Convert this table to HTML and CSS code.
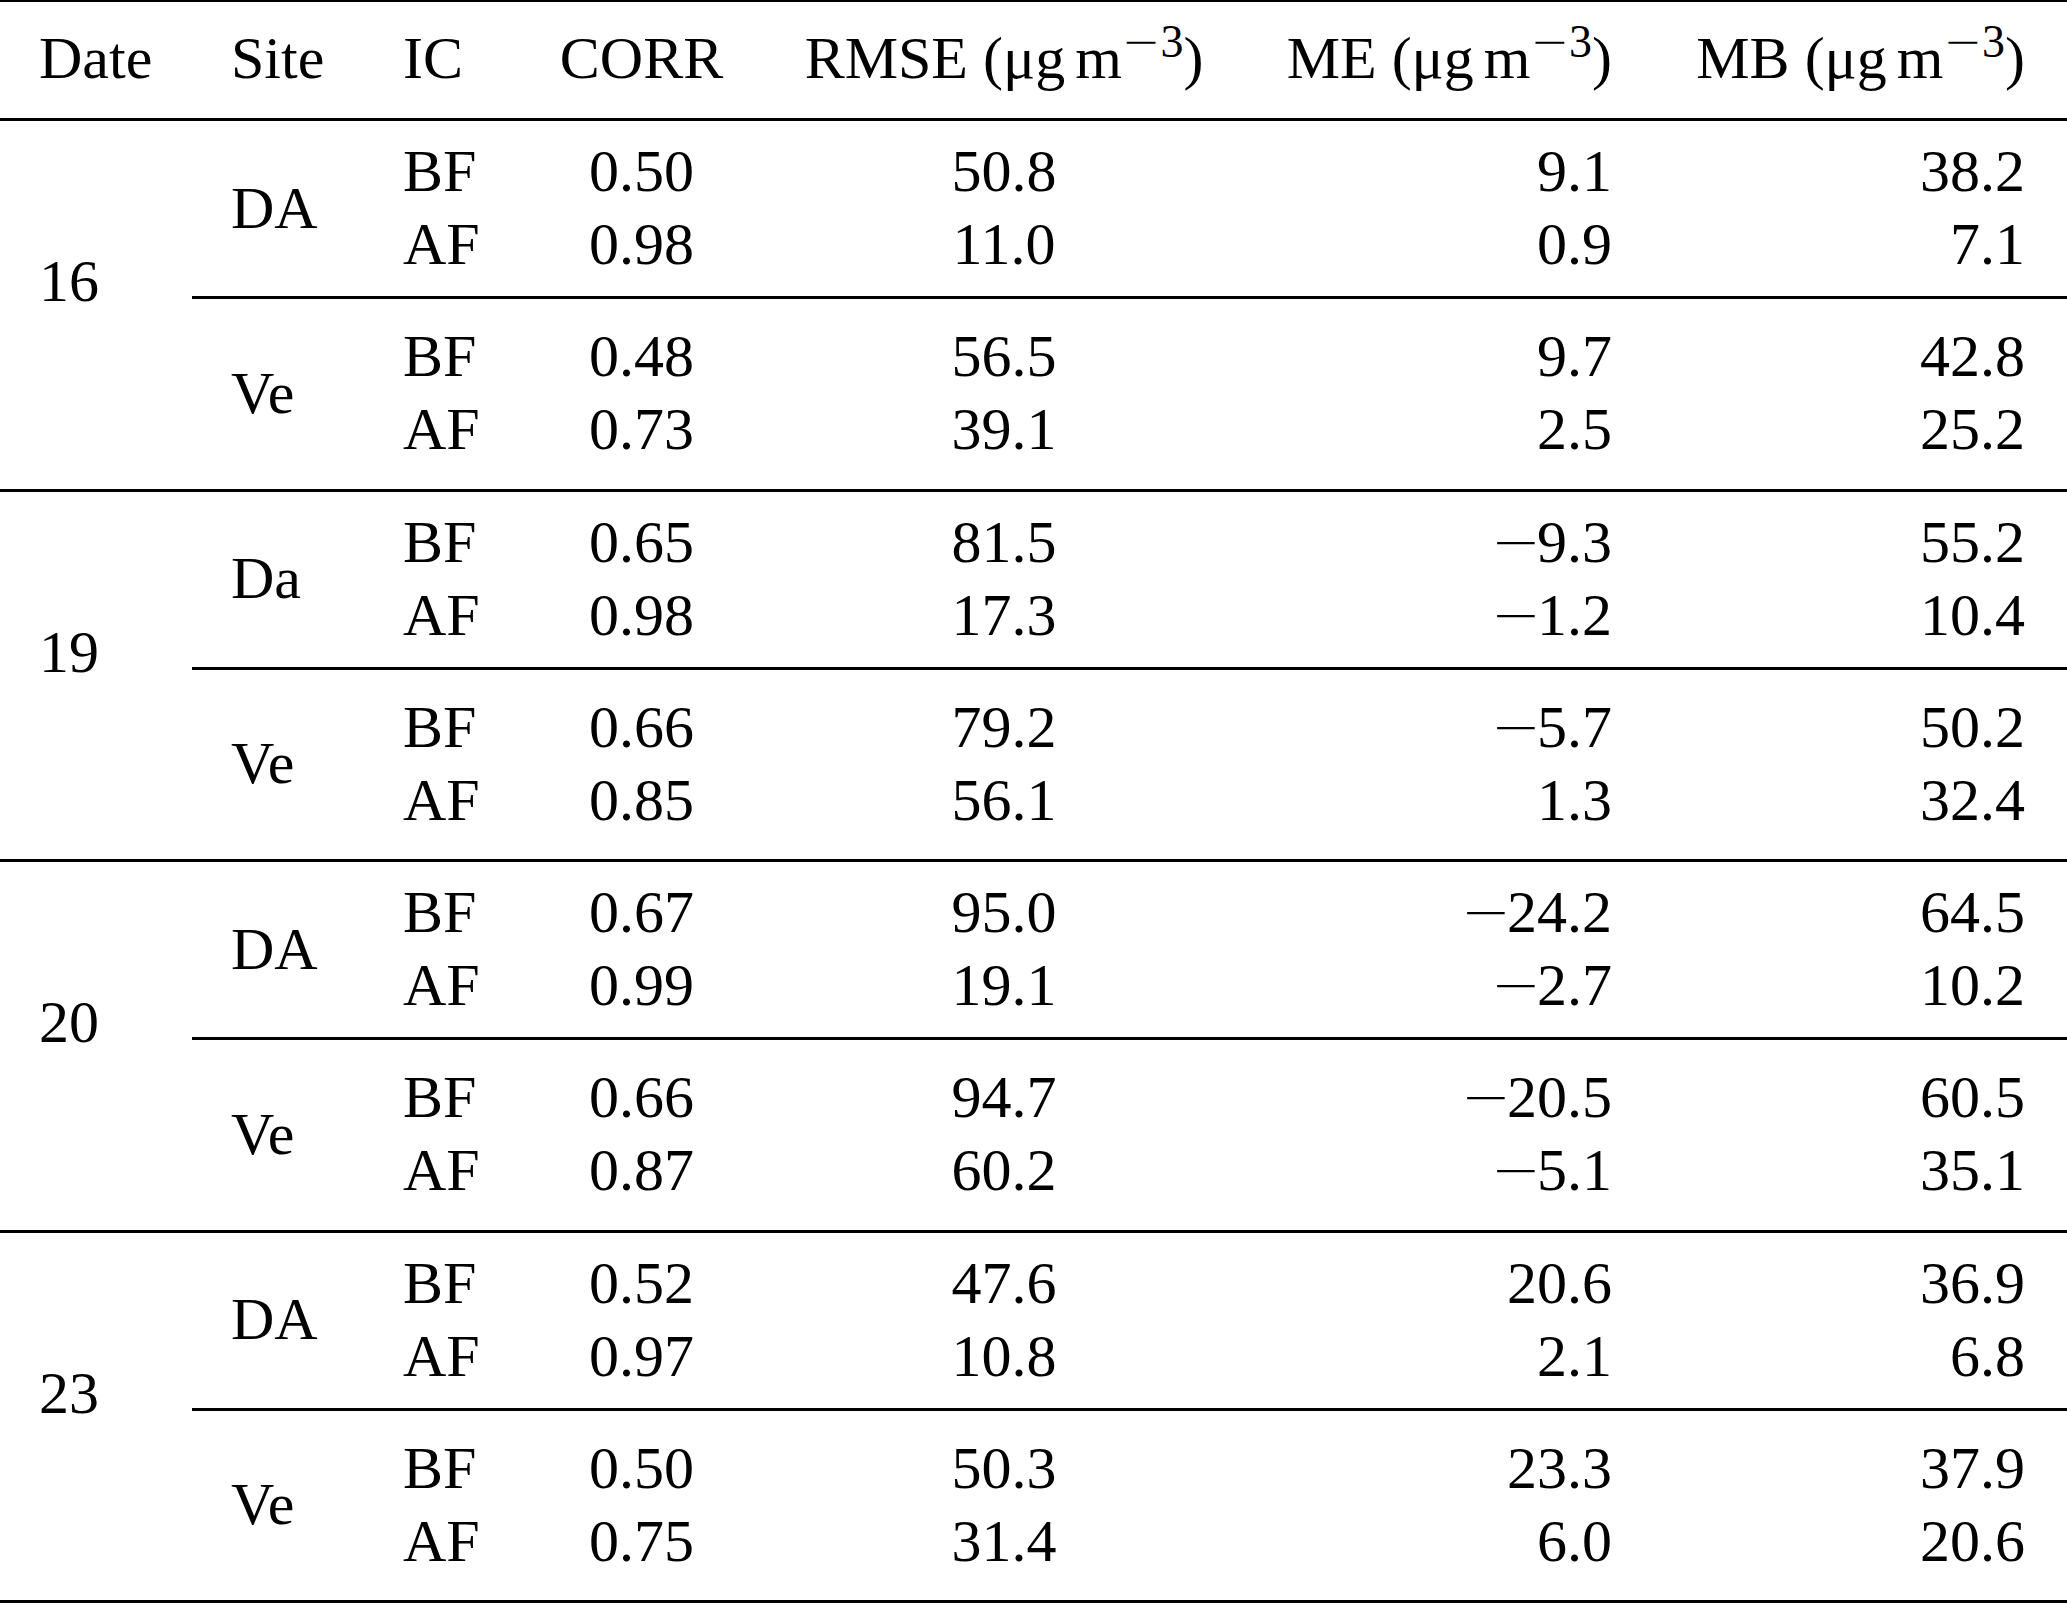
FILE: index.html
```html
<!DOCTYPE html>
<html lang="en">
<head>
<meta charset="utf-8">
<title>Table</title>
<link rel="stylesheet" href="styles.css">
</head>
<body>
<div class="table">
  <div class="head">
    <div>Date</div>
    <div>Site</div>
    <div>IC</div>
    <div class="ctr">CORR</div>
    <div class="ctr">RMSE (μg<span class="thin"></span>m<span class="sup"><span class="mi">−</span>3</span>)</div>
    <div class="rt">ME (μg<span class="thin"></span>m<span class="sup"><span class="mi">−</span>3</span>)</div>
    <div class="rt">MB (μg<span class="thin"></span>m<span class="sup"><span class="mi">−</span>3</span>)</div>
  </div>

  <div class="group">
    <div class="date">16</div>
    <div class="subs">
      <div class="sub">
        <div class="site">DA</div>
        <div>BF</div><div class="ctr">0.50</div><div class="ctr">50.8</div><div class="rt">9.1</div><div class="rt">38.2</div>
        <div>AF</div><div class="ctr">0.98</div><div class="ctr">11.0</div><div class="rt">0.9</div><div class="rt">7.1</div>
      </div>
      <div class="sub sub2">
        <div class="site">Ve</div>
        <div>BF</div><div class="ctr">0.48</div><div class="ctr">56.5</div><div class="rt">9.7</div><div class="rt">42.8</div>
        <div>AF</div><div class="ctr">0.73</div><div class="ctr">39.1</div><div class="rt">2.5</div><div class="rt">25.2</div>
      </div>
    </div>
  </div>

  <div class="group">
    <div class="date">19</div>
    <div class="subs">
      <div class="sub">
        <div class="site">Da</div>
        <div>BF</div><div class="ctr">0.65</div><div class="ctr">81.5</div><div class="rt"><span class="mi neg">−</span>9.3</div><div class="rt">55.2</div>
        <div>AF</div><div class="ctr">0.98</div><div class="ctr">17.3</div><div class="rt"><span class="mi neg">−</span>1.2</div><div class="rt">10.4</div>
      </div>
      <div class="sub sub2">
        <div class="site">Ve</div>
        <div>BF</div><div class="ctr">0.66</div><div class="ctr">79.2</div><div class="rt"><span class="mi neg">−</span>5.7</div><div class="rt">50.2</div>
        <div>AF</div><div class="ctr">0.85</div><div class="ctr">56.1</div><div class="rt">1.3</div><div class="rt">32.4</div>
      </div>
    </div>
  </div>

  <div class="group">
    <div class="date">20</div>
    <div class="subs">
      <div class="sub">
        <div class="site">DA</div>
        <div>BF</div><div class="ctr">0.67</div><div class="ctr">95.0</div><div class="rt"><span class="mi neg">−</span>24.2</div><div class="rt">64.5</div>
        <div>AF</div><div class="ctr">0.99</div><div class="ctr">19.1</div><div class="rt"><span class="mi neg">−</span>2.7</div><div class="rt">10.2</div>
      </div>
      <div class="sub sub2">
        <div class="site">Ve</div>
        <div>BF</div><div class="ctr">0.66</div><div class="ctr">94.7</div><div class="rt"><span class="mi neg">−</span>20.5</div><div class="rt">60.5</div>
        <div>AF</div><div class="ctr">0.87</div><div class="ctr">60.2</div><div class="rt"><span class="mi neg">−</span>5.1</div><div class="rt">35.1</div>
      </div>
    </div>
  </div>

  <div class="group">
    <div class="date">23</div>
    <div class="subs">
      <div class="sub">
        <div class="site">DA</div>
        <div>BF</div><div class="ctr">0.52</div><div class="ctr">47.6</div><div class="rt">20.6</div><div class="rt">36.9</div>
        <div>AF</div><div class="ctr">0.97</div><div class="ctr">10.8</div><div class="rt">2.1</div><div class="rt">6.8</div>
      </div>
      <div class="sub sub2">
        <div class="site">Ve</div>
        <div>BF</div><div class="ctr">0.50</div><div class="ctr">50.3</div><div class="rt">23.3</div><div class="rt">37.9</div>
        <div>AF</div><div class="ctr">0.75</div><div class="ctr">31.4</div><div class="rt">6.0</div><div class="rt">20.6</div>
      </div>
    </div>
  </div>
</div>
</body>
</html>
```

FILE: styles.css
```css
html, body {
  margin: 0;
  padding: 0;
  background: #ffffff;
}

body {
  color: #000000;
  font-family: "Liberation Serif", "Times New Roman", serif;
  font-size: 60px;
  line-height: 73px;
}

.table {
  width: 2067px;
  border-top: 2px solid #000;
  border-bottom: 3px solid #000;
}

.head {
  display: grid;
  grid-template-columns: 114px 94px 78px 165px 404px 328px 335px;
  column-gap: 78px;
  padding: 20px 42px 23px 39px;
  border-bottom: 3px solid #000;
  white-space: nowrap;
}

.group {
  display: flex;
}

.group + .group {
  border-top: 3px solid #000;
}

.date {
  width: 114px;
  padding: 124px 39px 0 39px;
  flex: none;
}

.subs {
  flex: 1;
  display: flex;
  flex-direction: column;
}

.sub {
  display: grid;
  grid-template-columns: 94px 78px 165px 404px 328px 335px;
  column-gap: 78px;
  padding: 14px 42px 15px 39px;
  white-space: nowrap;
}

.sub2 {
  border-top: 3px solid #000;
  padding-top: 21px;
  padding-bottom: 22.5px;
}

.site {
  grid-row: span 2;
  align-self: center;
}

.ctr {
  text-align: center;
}

.rt {
  text-align: right;
}

.thin {
  display: inline-block;
  width: 10px;
}

.mi {
  font-family: "DejaVu Sans", sans-serif;
  font-weight: 300;
  line-height: 0;
}

.neg {
  margin-right: -4px;
}

.sup {
  font-size: 46px;
  line-height: 0;
  vertical-align: 21px;
}
```
